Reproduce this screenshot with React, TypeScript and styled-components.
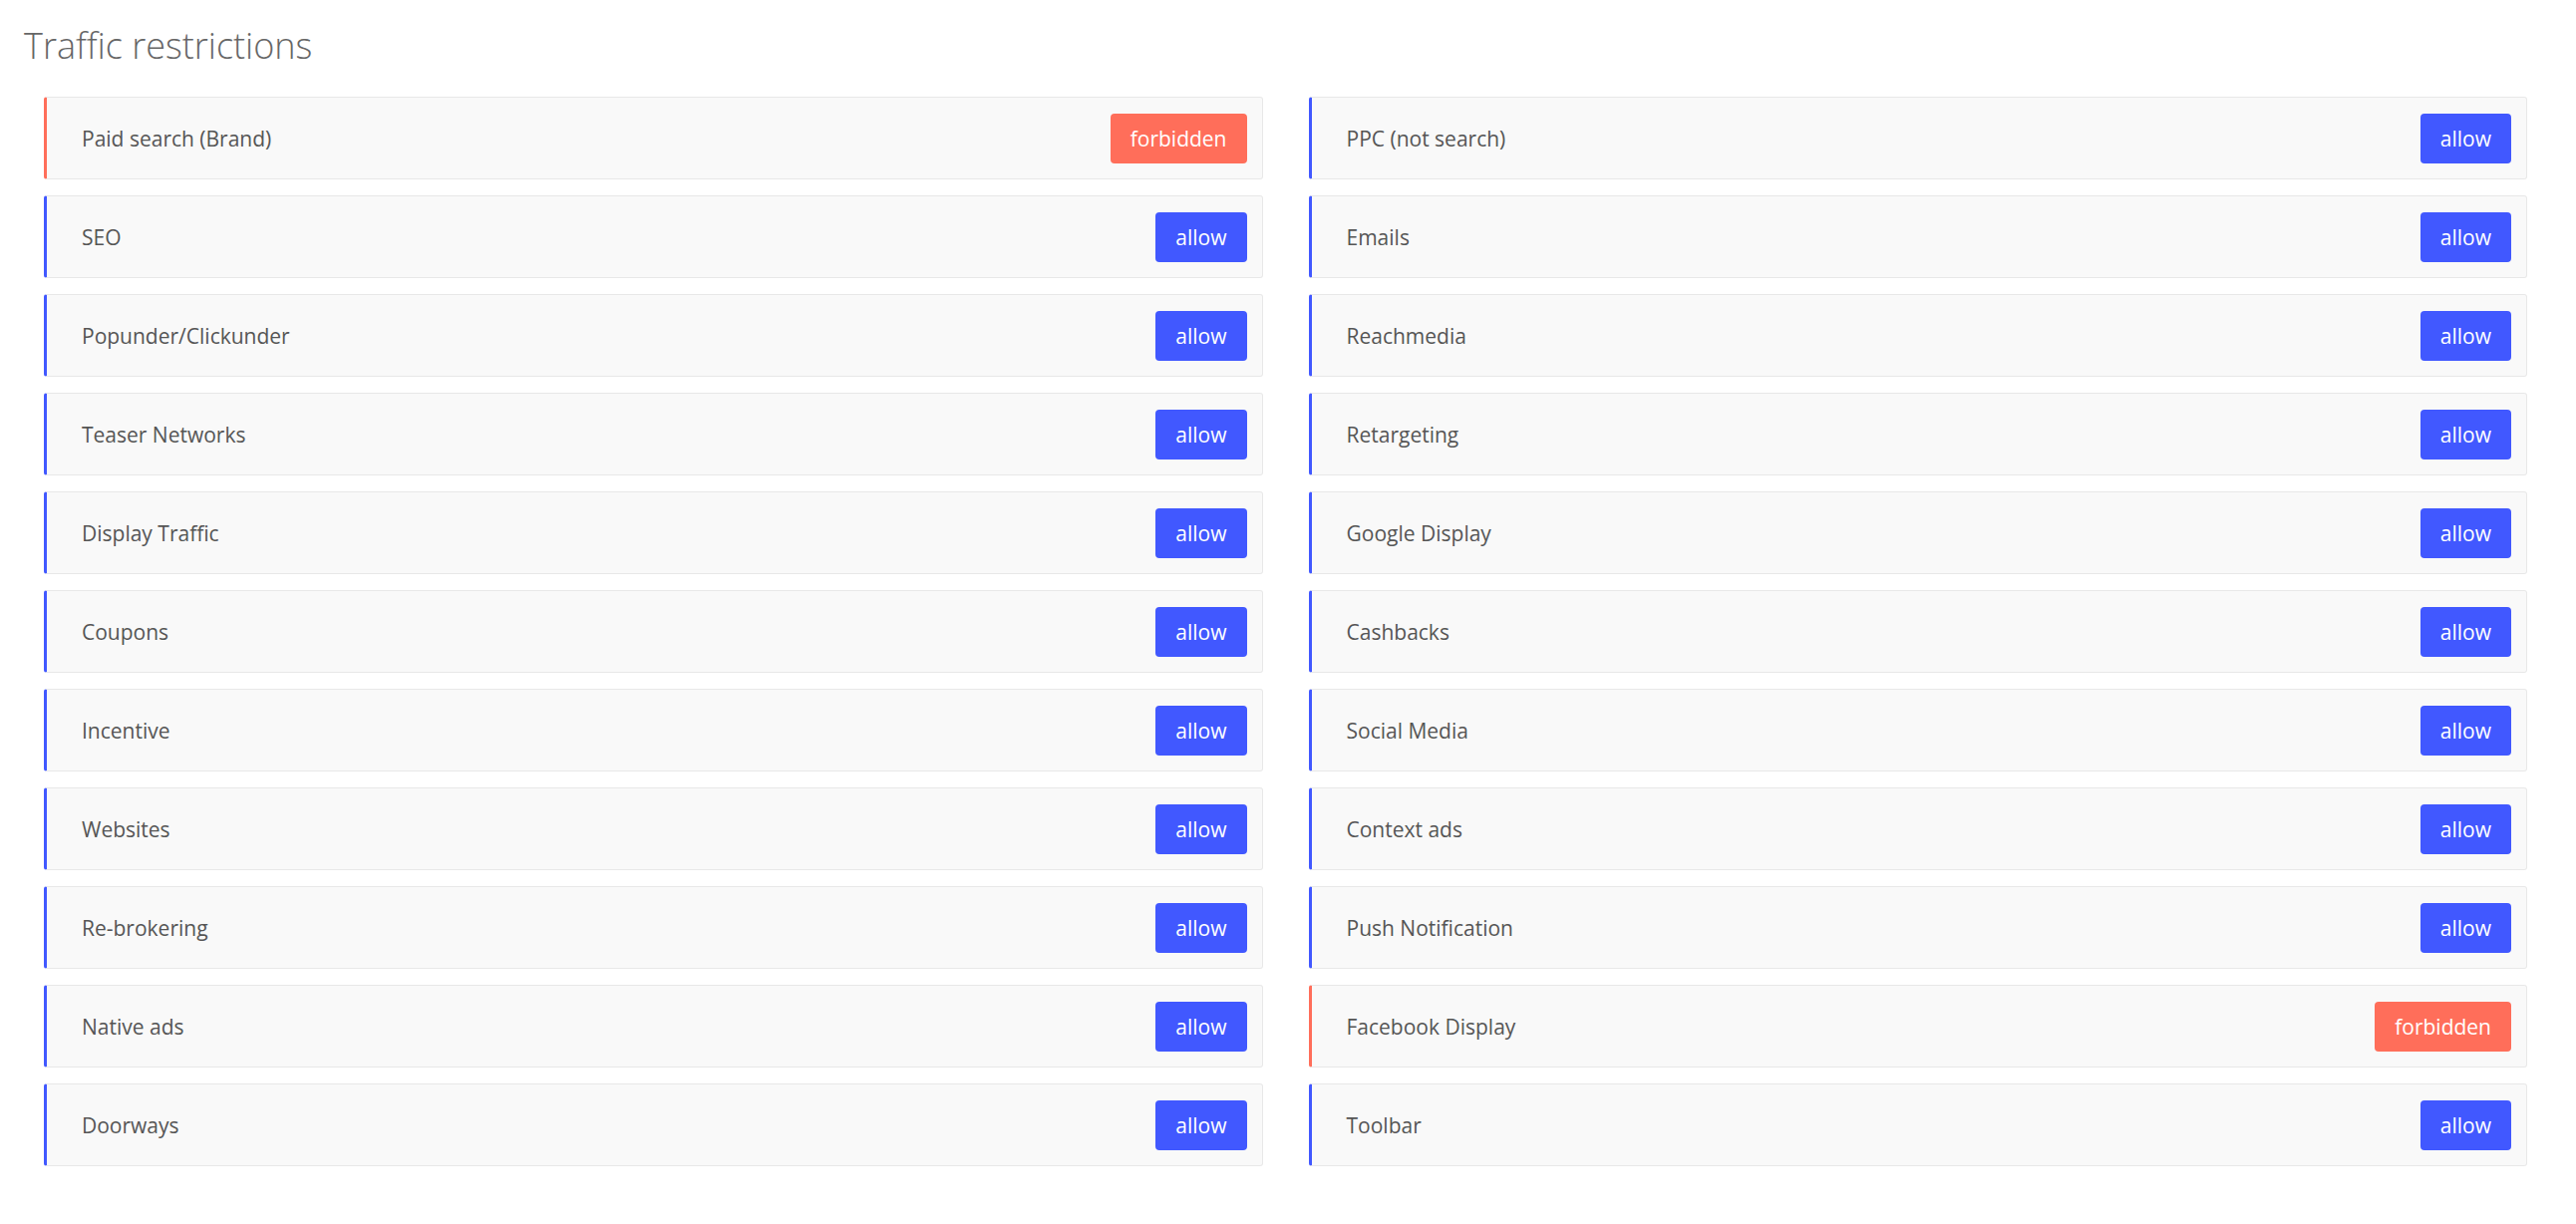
import styled, { createGlobalStyle } from 'styled-components';

type Status = 'allow' | 'forbidden';

interface Restriction {
  name: string;
  status: Status;
}

const left: Restriction[] = [
  { name: 'Paid search (Brand)', status: 'forbidden' },
  { name: 'SEO', status: 'allow' },
  { name: 'Popunder/Clickunder', status: 'allow' },
  { name: 'Teaser Networks', status: 'allow' },
  { name: 'Display Traffic', status: 'allow' },
  { name: 'Coupons', status: 'allow' },
  { name: 'Incentive', status: 'allow' },
  { name: 'Websites', status: 'allow' },
  { name: 'Re-brokering', status: 'allow' },
  { name: 'Native ads', status: 'allow' },
  { name: 'Doorways', status: 'allow' },
];

const right: Restriction[] = [
  { name: 'PPC (not search)', status: 'allow' },
  { name: 'Emails', status: 'allow' },
  { name: 'Reachmedia', status: 'allow' },
  { name: 'Retargeting', status: 'allow' },
  { name: 'Google Display', status: 'allow' },
  { name: 'Cashbacks', status: 'allow' },
  { name: 'Social Media', status: 'allow' },
  { name: 'Context ads', status: 'allow' },
  { name: 'Push Notification', status: 'allow' },
  { name: 'Facebook Display', status: 'forbidden' },
  { name: 'Toolbar', status: 'allow' },
];

const colors = {
  allow: '#4158ff',
  forbidden: '#ff6e5a',
};

const App: React.FC = () => {
  return (
    <>
      <GlobalStyle />
      <Page>
        <Title>Traffic restrictions</Title>
        <Columns>
          {[left, right].map((col, i) => (
            <Column key={i}>
              {col.map((item) => (
                <Row key={item.name} status={item.status}>
                  <Label>{item.name}</Label>
                  <StatusButton status={item.status}>{item.status}</StatusButton>
                </Row>
              ))}
            </Column>
          ))}
        </Columns>
      </Page>
    </>
  );
};

const GlobalStyle = createGlobalStyle`
  body {
    margin: 0;
    background: #fff;
    font-family: 'Open Sans', 'Noto Sans', sans-serif;
  }
`;

const Page = styled.section`
  padding: 18px 24px 0 24px;
`;

const Title = styled.h1`
  margin: 0;
  font-size: 36px;
  line-height: 56px;
  font-weight: 300;
  color: #666;
`;

const Columns = styled.div`
  display: grid;
  grid-template-columns: 1fr 1fr;
  column-gap: 46px;
  padding: 0 25px 0 20px;
  margin-top: 23px;
`;

const Column = styled.div`
  display: flex;
  flex-direction: column;
  gap: 16px;
`;

const Row = styled.div<{ status: Status }>`
  display: flex;
  align-items: center;
  justify-content: space-between;
  height: 83px;
  box-sizing: border-box;
  padding: 0 15px 0 35px;
  background: #f9f9f9;
  border: 1px solid #e8e8e8;
  border-left: 3px solid ${(p) => colors[p.status]};
  border-radius: 3px;
`;

const Label = styled.span`
  font-size: 21px;
  color: #555;
`;

const StatusButton = styled.button<{ status: Status }>`
  height: 50px;
  padding: 0 20px;
  border: none;
  border-radius: 4px;
  background: ${(p) => colors[p.status]};
  color: #fff;
  font-family: 'Open Sans', 'Noto Sans', sans-serif;
  font-size: 21px;
  cursor: pointer;
`;

export default App;
